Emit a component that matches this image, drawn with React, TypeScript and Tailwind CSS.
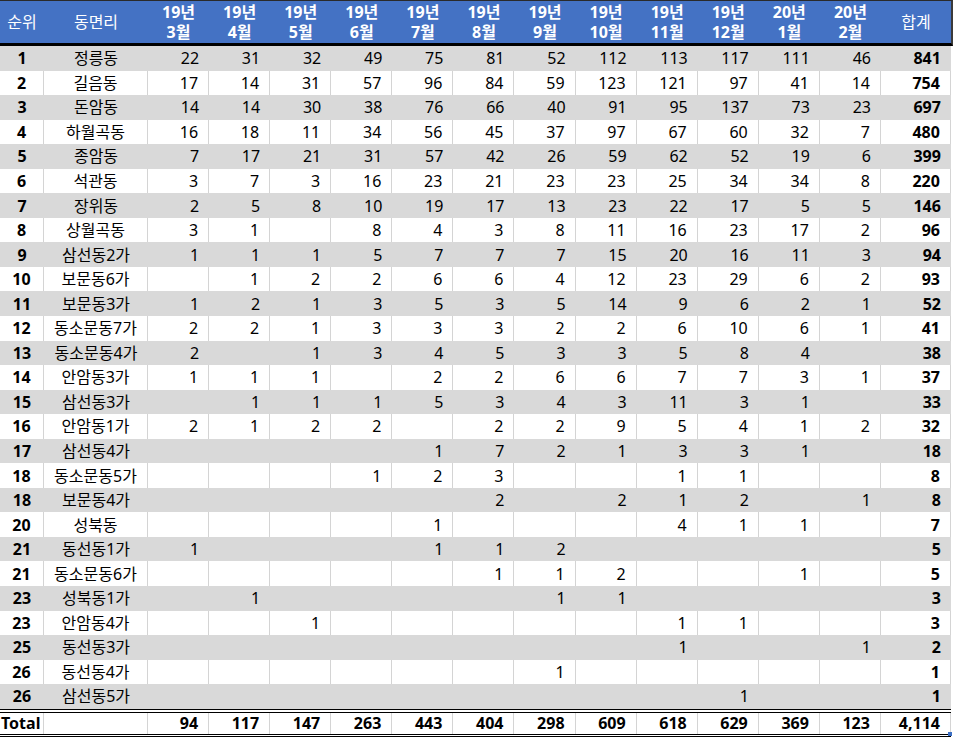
import React from "react";

type Row = [string, string, (number | null)[], string];

const _ = null;

const rows: Row[] = [
  ["1", "정릉동", [22, 31, 32, 49, 75, 81, 52, 112, 113, 117, 111, 46], "841"],
  ["2", "길음동", [17, 14, 31, 57, 96, 84, 59, 123, 121, 97, 41, 14], "754"],
  ["3", "돈암동", [14, 14, 30, 38, 76, 66, 40, 91, 95, 137, 73, 23], "697"],
  ["4", "하월곡동", [16, 18, 11, 34, 56, 45, 37, 97, 67, 60, 32, 7], "480"],
  ["5", "종암동", [7, 17, 21, 31, 57, 42, 26, 59, 62, 52, 19, 6], "399"],
  ["6", "석관동", [3, 7, 3, 16, 23, 21, 23, 23, 25, 34, 34, 8], "220"],
  ["7", "장위동", [2, 5, 8, 10, 19, 17, 13, 23, 22, 17, 5, 5], "146"],
  ["8", "상월곡동", [3, 1, _, 8, 4, 3, 8, 11, 16, 23, 17, 2], "96"],
  ["9", "삼선동2가", [1, 1, 1, 5, 7, 7, 7, 15, 20, 16, 11, 3], "94"],
  ["10", "보문동6가", [_, 1, 2, 2, 6, 6, 4, 12, 23, 29, 6, 2], "93"],
  ["11", "보문동3가", [1, 2, 1, 3, 5, 3, 5, 14, 9, 6, 2, 1], "52"],
  ["12", "동소문동7가", [2, 2, 1, 3, 3, 3, 2, 2, 6, 10, 6, 1], "41"],
  ["13", "동소문동4가", [2, _, 1, 3, 4, 5, 3, 3, 5, 8, 4, _], "38"],
  ["14", "안암동3가", [1, 1, 1, _, 2, 2, 6, 6, 7, 7, 3, 1], "37"],
  ["15", "삼선동3가", [_, 1, 1, 1, 5, 3, 4, 3, 11, 3, 1, _], "33"],
  ["16", "안암동1가", [2, 1, 2, 2, _, 2, 2, 9, 5, 4, 1, 2], "32"],
  ["17", "삼선동4가", [_, _, _, _, 1, 7, 2, 1, 3, 3, 1, _], "18"],
  ["18", "동소문동5가", [_, _, _, 1, 2, 3, _, _, 1, 1, _, _], "8"],
  ["18", "보문동4가", [_, _, _, _, _, 2, _, 2, 1, 2, _, 1], "8"],
  ["20", "성북동", [_, _, _, _, 1, _, _, _, 4, 1, 1, _], "7"],
  ["21", "동선동1가", [1, _, _, _, 1, 1, 2, _, _, _, _, _], "5"],
  ["21", "동소문동6가", [_, _, _, _, _, 1, 1, 2, _, _, 1, _], "5"],
  ["23", "성북동1가", [_, 1, _, _, _, _, 1, 1, _, _, _, _], "3"],
  ["23", "안암동4가", [_, _, 1, _, _, _, _, _, 1, 1, _, _], "3"],
  ["25", "동선동3가", [_, _, _, _, _, _, _, _, 1, _, _, 1], "2"],
  ["26", "동선동4가", [_, _, _, _, _, _, 1, _, _, _, _, _], "1"],
  ["26", "삼선동5가", [_, _, _, _, _, _, _, _, _, 1, _, _], "1"],
];

const months: [string, string][] = [
  ["19년", "3월"],
  ["19년", "4월"],
  ["19년", "5월"],
  ["19년", "6월"],
  ["19년", "7월"],
  ["19년", "8월"],
  ["19년", "9월"],
  ["19년", "10월"],
  ["19년", "11월"],
  ["19년", "12월"],
  ["20년", "1월"],
  ["20년", "2월"],
];

const totals = ["94", "117", "147", "263", "443", "404", "298", "609", "618", "629", "369", "123"];

const grid = "grid grid-cols-[44px_104px_repeat(12,61.083px)_70px]";

export default function App() {
  return (
    <div className="w-[953px] h-[738px] bg-white text-black font-['Noto_Sans','Noto_Sans_CJK_KR',sans-serif] text-[16px] leading-none relative overflow-hidden">
      {/* Header */}
      <div className="w-[953px] border-t border-[#2a2a2a] border-b-[3px] border-b-black border-r-2 border-r-[#3a3a3a] bg-[#4472c4] text-white">
        <div className={`${grid} h-[42px]`}>
          <div className="flex items-center justify-center">순위</div>
          <div className="flex items-center justify-center">동면리</div>
          {months.map(([y, m], i) => (
            <div key={i} className="flex flex-col items-center justify-center font-bold leading-[20px]">
              <span>{y}</span>
              <span>{m}</span>
            </div>
          ))}
          <div className="flex items-center justify-center">합계</div>
        </div>
      </div>

      {/* Body */}
      <div className="w-[951px]">
        {rows.map(([rank, name, vals, total], r) => {
          const gray = r % 2 === 0;
          const line = gray ? "" : "border-r border-[#d4d4d4]";
          return (
            <div key={r} className={`${grid} h-[24.56px] ${gray ? "bg-[#d9d9d9]" : "bg-white"}`}>
              <div className={`flex items-center justify-center font-bold ${line}`}>{rank}</div>
              <div className={`flex items-center justify-center ${line}`}>{name}</div>
              {vals.map((v, i) => (
                <div key={i} className={`flex items-center justify-end pr-[10px] ${line}`}>
                  {v === null ? "" : v}
                </div>
              ))}
              <div className={`flex items-center justify-end pr-[10px] font-bold ${line}`}>{total}</div>
            </div>
          );
        })}
      </div>

      {/* Total */}
      <div className="w-[951px] border-t-[4px] border-double border-black border-b-[3px] border-b-black bg-white">
        <div className={`${grid} h-[21px] font-bold`}>
          <div className="flex items-center pl-[1px] border-r border-[#d4d4d4]">Total</div>
          <div className="border-r border-[#d4d4d4]"></div>
          {totals.map((t, i) => (
            <div key={i} className="flex items-center justify-end pr-[10px] border-r border-[#d4d4d4]">
              {t}
            </div>
          ))}
          <div className="flex items-center justify-end pr-[10px] border-r border-[#d4d4d4]">4,114</div>
        </div>
      </div>
      <div className="absolute left-[948px] top-[732px] w-[4px] h-[4px] bg-[#3c6fc4]"></div>
    </div>
  );
}
